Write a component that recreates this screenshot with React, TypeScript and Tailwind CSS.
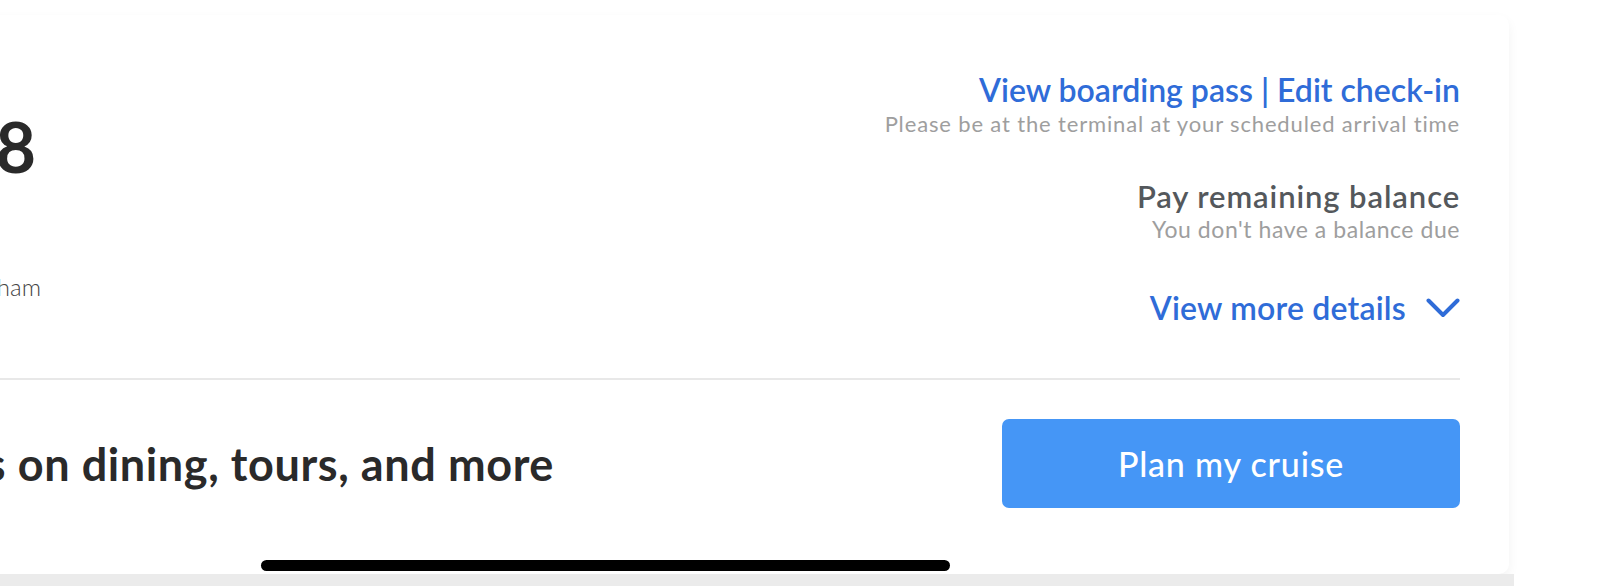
const ChevronDown = () => (
  <svg width="34" height="20" viewBox="0 0 34 20" fill="none">
    <path d="M2.5 2.5L17 17L31.5 2.5" stroke="#2f6cd8" strokeWidth="4" strokeLinecap="round" strokeLinejoin="round" />
  </svg>
);

export default function App() {
  return (
    <div className="relative h-[586px] w-[1618px] overflow-hidden bg-white font-['Lato',sans-serif]">
      <div className="flex flex-col items-end pr-[104px] pt-[15px]">
        <div className="mr-[5px] w-[1800px] shrink-0 rounded-[10px] bg-white pr-[49px] shadow-[0_5px_12px_rgba(0,0,0,0.05)]">
          {/* trip summary */}
          <div className="flex pt-[56px] pb-[51px]">
            <div className="flex w-[332px] shrink-0 flex-col items-end whitespace-nowrap pt-[33px]">
              <div className="pr-[5px] text-[70px] leading-[1.2] font-bold text-[#2a2a2a]">Oct 14 - Oct 18</div>
              <div className="mt-[85px] text-[24px] leading-[1.2] font-light text-[#444]">Roundtrip from Birmingham</div>
            </div>
            <div className="flex flex-1 flex-col items-end whitespace-nowrap">
              <div className="text-[32px] leading-[1.2] font-semibold text-[#2f6cd8]">View boarding pass | Edit check-in</div>
              <div className="mt-[1.5px] text-[22px] leading-[1.2] tracking-[0.85px] text-[#9e9e9e]">
                Please be at the terminal at your scheduled arrival time
              </div>
              <div className="mt-[41px] text-[31px] leading-[1.2] font-semibold tracking-[0.9px] text-[#54585c]">Pay remaining balance</div>
              <div className="mt-[1px] text-[23px] leading-[1.2] tracking-[0.55px] text-[#9e9e9e]">You don't have a balance due</div>
              <div className="mt-[45px] flex items-center gap-[20px]">
                <span className="text-[32px] leading-[1.2] font-semibold tracking-[0.2px] text-[#2f6cd8]">View more details</span>
                <ChevronDown />
              </div>
            </div>
          </div>
          <div className="h-[2px] bg-[#e8e8e8]" />
          {/* plan cruise */}
          <div className="flex items-center justify-between pt-[39px] pb-[66px]">
            <div className="flex w-[845px] shrink-0 justify-end whitespace-nowrap text-[45px] leading-[1.2] font-bold tracking-[0.6px] text-[#2a2a2a]">
              <span>Get exclusive deals on dining, tours, and more</span>
            </div>
            <button
              type="button"
              className="flex h-[89px] w-[458px] items-center justify-center rounded-[7px] bg-[#4596f6] text-[34px] font-medium tracking-[0.8px] text-white"
            >
              Plan my cruise
            </button>
          </div>
        </div>
        <div className="h-[20px] w-[1810px] shrink-0 bg-[#ebebeb]" />
      </div>
      <div className="absolute bottom-[15px] left-[261px] h-[11px] w-[689px] rounded-full bg-black" />
    </div>
  );
}
